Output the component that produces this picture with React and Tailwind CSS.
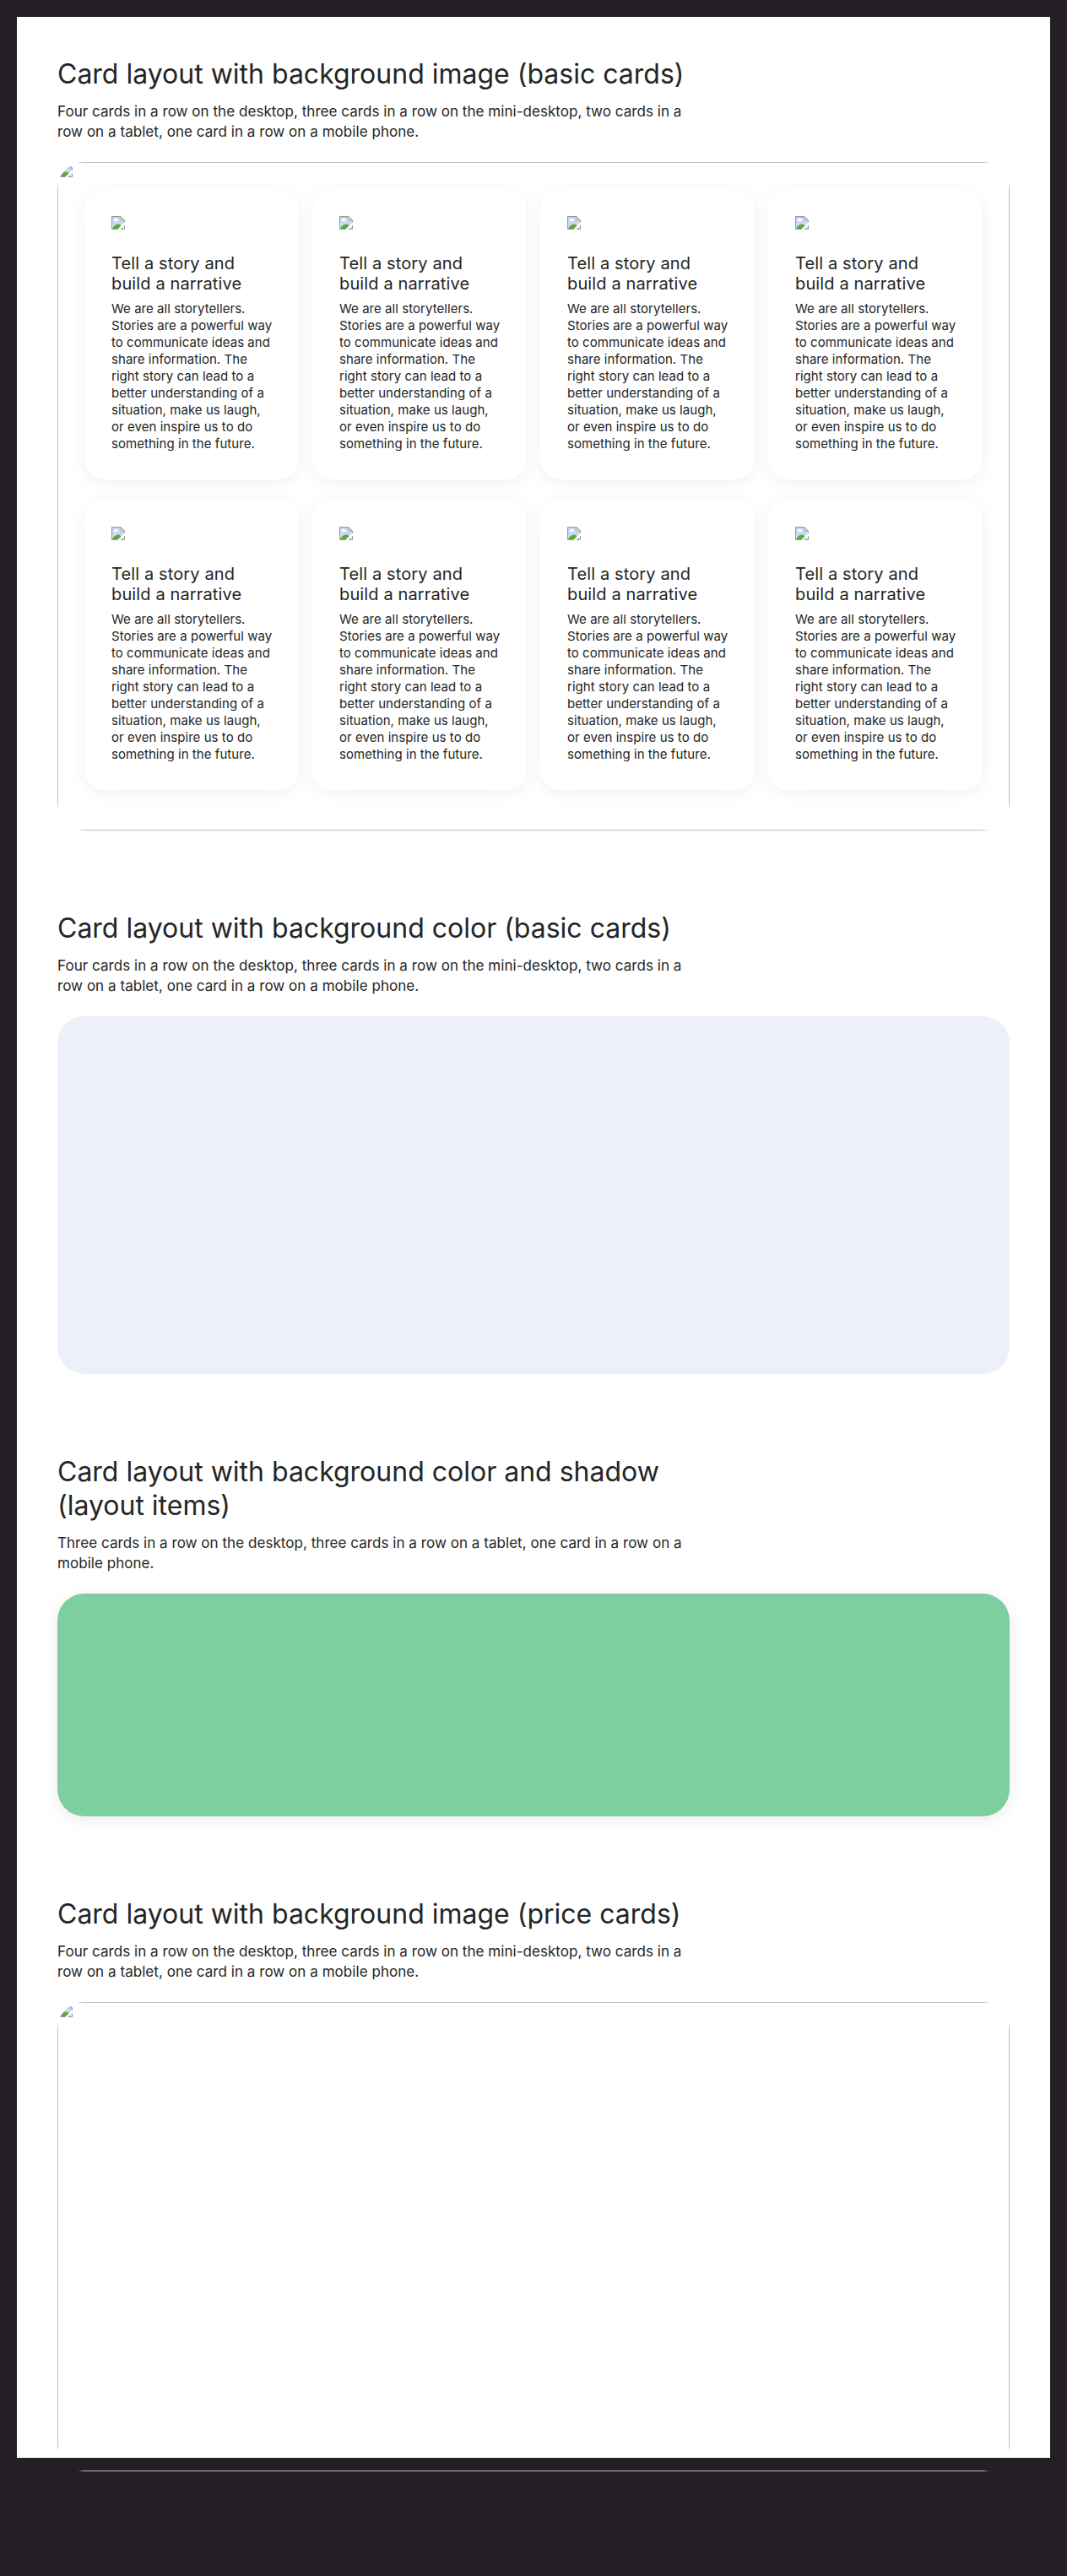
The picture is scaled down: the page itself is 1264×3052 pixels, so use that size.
const STORY =
  'We are all storytellers. Stories are a powerful way to communicate ideas and share information. The right story can lead to a better understanding of a situation, make us laugh, or even inspire us to do something in the future.';

const FOUR =
  'Four cards in a row on the desktop, three cards in a row on the mini-desktop, two cards in a row on a tablet, one card in a row on a mobile phone.';

function ImageIcon() {
  return (
    <svg width="16" height="16" viewBox="0 0 16 16" className="block shrink-0" aria-hidden="true">
      <defs>
        <linearGradient id="sky" x1="0" y1="0" x2="0" y2="1">
          <stop offset="0" stopColor="#c0d0f2" />
          <stop offset="1" stopColor="#d3e0fa" />
        </linearGradient>
      </defs>
      <path d="M0.5 0.5H11L15.5 5V15.5H0.5Z" fill="url(#sky)" />
      <path d="M3 6a1.2 1.2 0 0 1 .4-2.2A1.6 1.6 0 0 1 6.4 3.5A1.3 1.3 0 0 1 7.6 6Z" fill="#fff" />
      <path d="M1 15C2.5 12 5 9.6 8 9.6C10 9.6 12 11 13 15Z" fill="#5aac35" />
      <path d="M0.5 15.5V0.5H11L15.5 5V15.5Z" fill="none" stroke="#999" />
      <path d="M11 1V5H15Z" fill="#fff" stroke="#999" strokeWidth="0.9" />
      <path d="M16 7V10.5L10.5 16H7Z" fill="#fff" />
    </svg>
  );
}

function Section({ title, text, children }) {
  return (
    <section className="shrink-0">
      <h2 className="max-w-[744px] text-[32px] leading-10">{title}</h2>
      <p className="mt-3 mb-6 max-w-[744px] text-[17px] leading-6 tracking-[0.045px]">{text}</p>
      {children}
    </section>
  );
}

function Framed({ className, children }) {
  return (
    <div className={`relative ${className}`}>
      <div className="absolute inset-0 overflow-hidden rounded-[32px]">
        <div className="h-full border border-[#c0c0c0] p-px">
          <ImageIcon />
        </div>
      </div>
      {children}
    </div>
  );
}

function StoryCard() {
  return (
    <article className="h-[344px] rounded-3xl bg-white p-8 shadow-[0_4px_20px_rgba(0,0,0,0.06)]">
      <div className="h-11">
        <ImageIcon />
      </div>
      <h3 className="mb-2 text-xl leading-6 tracking-[0.13px]">Tell a story and build a narrative</h3>
      <p className="-mr-1 text-[15px] leading-5 tracking-[0.05px]">{STORY}</p>
    </article>
  );
}

export default function App() {
  return (
    <div className="h-[3052px] bg-[#231f24] p-5 font-['Inter',sans-serif] text-[#252525]">
      <main className="flex h-[2892px] flex-col gap-24 bg-white p-12">
        <Section title="Card layout with background image (basic cards)" text={FOUR}>
          <Framed className="h-[792px] p-8">
            <div className="relative grid grid-cols-4 gap-x-4 gap-y-6">
              {Array.from({ length: 8 }, (_, i) => (
                <StoryCard key={i} />
              ))}
            </div>
          </Framed>
        </Section>
        <Section title="Card layout with background color (basic cards)" text={FOUR}>
          <div className="h-[424px] rounded-[32px] bg-[#edf0f9]" />
        </Section>
        <Section
          title="Card layout with background color and shadow (layout items)"
          text="Three cards in a row on the desktop, three cards in a row on a tablet, one card in a row on a mobile phone."
        >
          <div className="h-[264px] rounded-[32px] bg-[#7dcfa0] shadow-[0_4px_20px_rgba(0,0,0,0.08)]" />
        </Section>
        <Section title="Card layout with background image (price cards)" text={FOUR}>
          <Framed className="h-[556px]" />
        </Section>
      </main>
    </div>
  );
}
